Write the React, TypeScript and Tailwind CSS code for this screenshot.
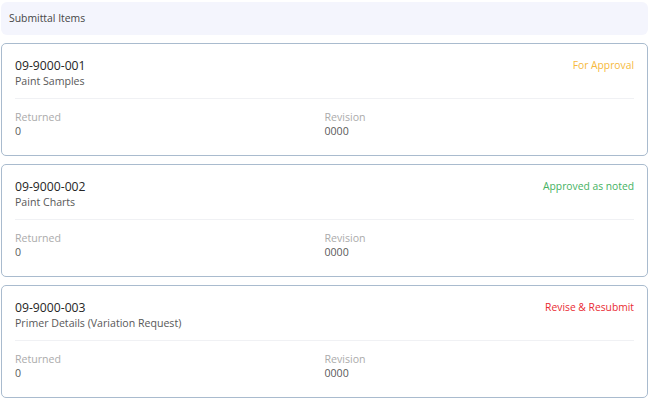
import React from "react";

type Item = {
  code: string;
  name: string;
  status: string;
  statusClass: string;
  returned: string;
  revision: string;
};

const items: Item[] = [
  {
    code: "09-9000-001",
    name: "Paint Samples",
    status: "For Approval",
    statusClass: "text-[#f6b93b]",
    returned: "0",
    revision: "0000",
  },
  {
    code: "09-9000-002",
    name: "Paint Charts",
    status: "Approved as noted",
    statusClass: "text-[#45b262]",
    returned: "0",
    revision: "0000",
  },
  {
    code: "09-9000-003",
    name: "Primer Details (Variation Request)",
    status: "Revise & Resubmit",
    statusClass: "text-[#e92b33]",
    returned: "0",
    revision: "0000",
  },
];

function ItemCard({ item }: { item: Item }) {
  return (
    <div className="h-[113px] rounded-[5px] border border-[#a9bbce] bg-white px-[13px] pt-[14px]">
      <div className="flex items-start justify-between">
        <div>
          <div className="text-[12.2px] leading-[16px] text-[#262626]">{item.code}</div>
          <div className="text-[10.6px] leading-[14px] text-[#585858]">{item.name}</div>
        </div>
        <div className={`pt-px text-[10.3px] leading-[13px] ${item.statusClass}`}>{item.status}</div>
      </div>
      <div className="mt-[10px] h-px bg-[#f0f1f4]" />
      <div className="mt-[11px] grid grid-cols-2 text-[10.6px] leading-[14px]">
        <div>
          <div className="text-[#ababab]">Returned</div>
          <div className="text-[#585858]">{item.returned}</div>
        </div>
        <div>
          <div className="text-[#ababab]">Revision</div>
          <div className="text-[#585858]">{item.revision}</div>
        </div>
      </div>
    </div>
  );
}

export default function App() {
  return (
    <div
      className="w-[649px] bg-white px-px pt-[2px]"
      style={{ fontFamily: '"Open Sans", "Noto Sans", sans-serif' }}
    >
      {/* Section header */}
      <div className="flex h-[33px] items-center rounded-md bg-[#f4f5fd] px-2 text-[10.4px] text-[#464646]">
        Submittal Items
      </div>

      <div className="mt-2 flex flex-col gap-2">
        {items.map((item) => (
          <ItemCard key={item.code} item={item} />
        ))}
      </div>
    </div>
  );
}
